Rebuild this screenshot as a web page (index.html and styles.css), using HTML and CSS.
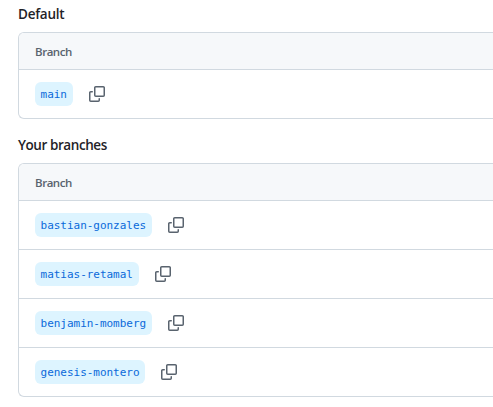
FILE: index.html
```html
<!DOCTYPE html>
<html lang="en">
<head>
<meta charset="utf-8">
<title>Branches</title>
<link rel="stylesheet" href="styles.css">
</head>
<body>
<svg width="0" height="0" class="sprite" aria-hidden="true">
  <symbol id="copy" viewBox="0 0 16 16">
    <path d="M0 6.75C0 5.784.784 5 1.75 5h1.5a.75.75 0 0 1 0 1.5h-1.5a.25.25 0 0 0-.25.25v7.5c0 .138.112.25.25.25h7.5a.25.25 0 0 0 .25-.25v-1.5a.75.75 0 0 1 1.5 0v1.5A1.75 1.75 0 0 1 9.25 16h-7.5A1.75 1.75 0 0 1 0 14.25Z"/>
    <path d="M5 1.75C5 .784 5.784 0 6.75 0h7.5C15.216 0 16 .784 16 1.75v7.5A1.75 1.75 0 0 1 14.25 11h-7.5A1.75 1.75 0 0 1 5 9.25Zm1.75-.25a.25.25 0 0 0-.25.25v7.5c0 .138.112.25.25.25h7.5a.25.25 0 0 0 .25-.25v-7.5a.25.25 0 0 0-.25-.25Z"/>
  </symbol>
</svg>
<main class="page">
  <section class="group">
    <h2 class="title">Default</h2>
    <div class="table">
      <div class="head"><span>Branch</span></div>
      <div class="row"><a class="branch">main</a><svg class="icon"><use href="#copy"/></svg></div>
    </div>
  </section>
  <section class="group">
    <h2 class="title title-yours">Your branches</h2>
    <div class="table">
      <div class="head"><span>Branch</span></div>
      <div class="row"><a class="branch">bastian-gonzales</a><svg class="icon"><use href="#copy"/></svg></div>
      <div class="row"><a class="branch">matias-retamal</a><svg class="icon"><use href="#copy"/></svg></div>
      <div class="row"><a class="branch">benjamin-momberg</a><svg class="icon"><use href="#copy"/></svg></div>
      <div class="row"><a class="branch">genesis-montero</a><svg class="icon"><use href="#copy"/></svg></div>
    </div>
  </section>
</main>
</body>
</html>
```
FILE: styles.css
```css
* { box-sizing: border-box; }
body {
  margin: 0;
  background: #fff;
  color: #1f2328;
  font-family: "Open Sans", "Noto Sans", sans-serif;
  overflow: hidden;
}
.sprite { display: none; }
.page {
  display: flex;
  flex-direction: column;
  gap: 16px;
  padding: 4px 0 0 18px;
}
.title {
  margin: 0 0 8px;
  font-size: 13.5px;
  font-weight: 600;
  line-height: 20px;
  letter-spacing: -0.25px;
}
.title-yours { letter-spacing: -0.43px; }
.table {
  border: 1px solid #d1d9e0;
  border-right: 0;
  border-radius: 6px 0 0 6px;
  overflow: hidden;
}
.head {
  height: 36px;
  padding-left: 16px;
  display: flex;
  align-items: center;
  background: #f6f8fa;
  color: #59636e;
  font-size: 11.5px;
  font-weight: 600;
  letter-spacing: -0.45px;
}
.row {
  height: 49px;
  padding-left: 16px;
  display: flex;
  align-items: center;
  gap: 16px;
  border-top: 1px solid #d1d9e0;
}
.branch {
  height: 24px;
  padding: 1px 6px 0 5.6px;
  border-radius: 6px;
  background: #ddf4ff;
  color: #0969da;
  font: 11px/23px "DejaVu Sans Mono", monospace;
  letter-spacing: -0.03px;
}
.icon {
  width: 16px;
  height: 16px;
  fill: #59636e;
}
```
